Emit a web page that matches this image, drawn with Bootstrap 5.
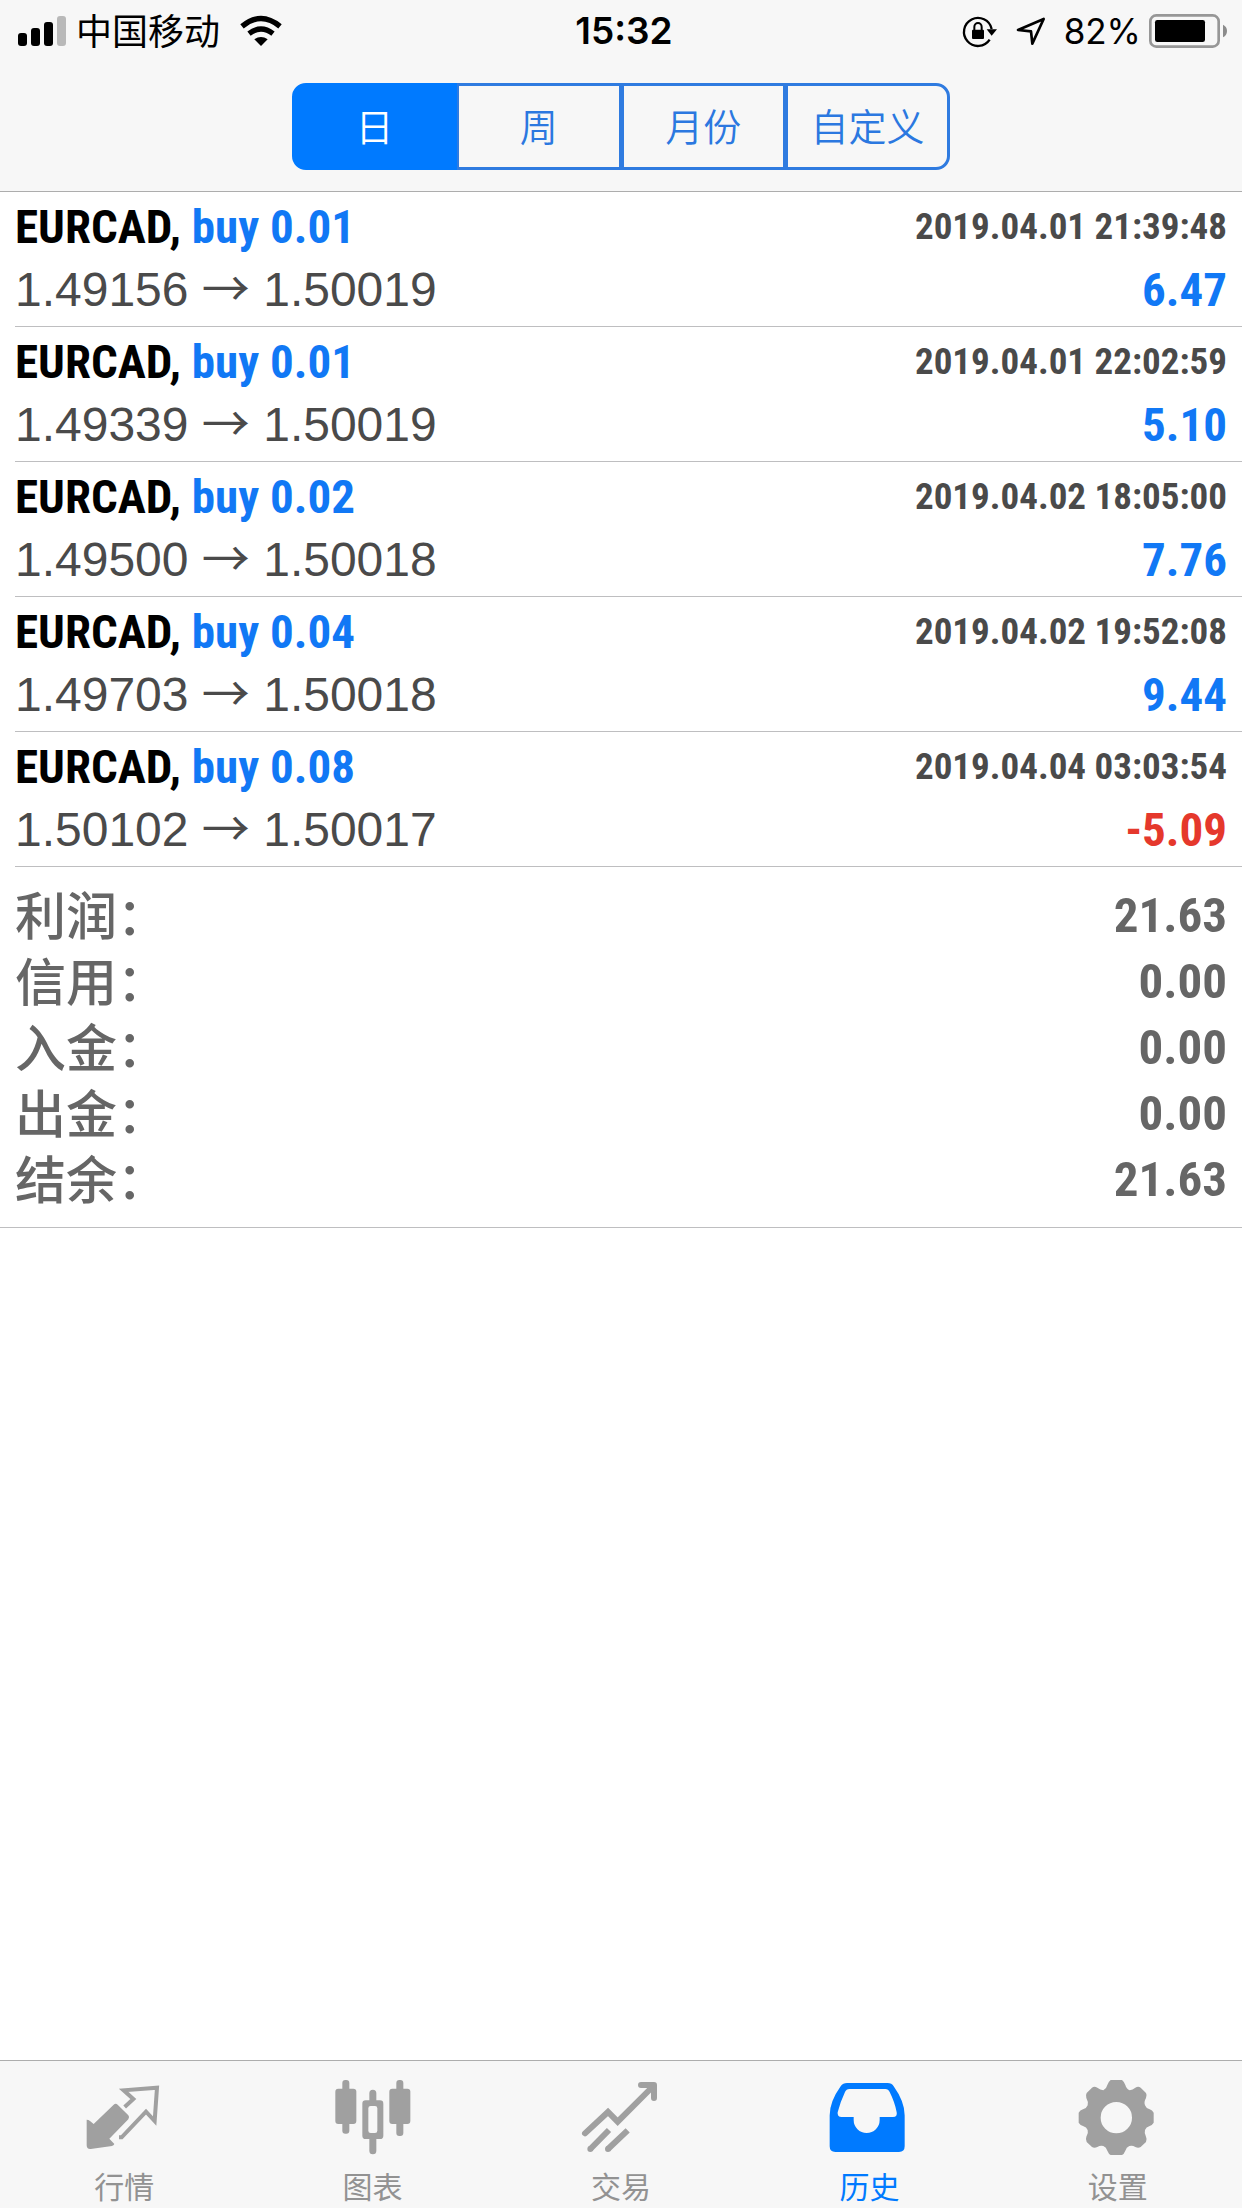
<!DOCTYPE html>
<html lang="zh-CN">
<head>
<meta charset="utf-8">
<meta name="viewport" content="width=device-width, initial-scale=1">
<title>历史</title>
<link href="https://cdn.jsdelivr.net/npm/bootstrap@5.3.0/dist/css/bootstrap.min.css" rel="stylesheet">
<style>
  :root { --ios-blue: #007aff; --bar: #f7f7f7; --edge: 15px; }
  body { font-family: "Liberation Sans", "Noto Sans CJK SC", sans-serif; color: #000; background: #fff; }
  svg { display: block; overflow: visible; flex: none; }
  .top-bar { background: var(--bar); border-bottom: 1px solid #adadad; padding-bottom: 21px; }
  .status-line { height: 62px; padding: 0 15px 0 18px; font-family: Inter, "Noto Sans CJK SC", sans-serif; font-size: 36px; line-height: 36px; }
  .status-side { flex: 1 1 0; }
  .carrier { margin-left: 10px; margin-right: 20px; padding-top: 2px; }
  .clock { font-size: 37px; font-weight: 600; padding-left: 3px; }
  .locate { margin-left: 20px; }
  .charge { font-size: 35px; margin: 0 8px 0 19px; }
  .period { width: 53%; margin-top: 21px; }
  .period .btn { flex: 1 1 0; padding: 0; height: 87px; line-height: 78px; font-size: 38px; font-family: "Noto Sans CJK SC", sans-serif; font-weight: 350;
    border-width: 3px; border-radius: 14px;
    --bs-btn-color: #2b78e0; --bs-btn-border-color: #2f7be0;
    --bs-btn-hover-color: #2b78e0; --bs-btn-hover-border-color: #2f7be0;
    --bs-btn-active-color: #fff; --bs-btn-active-bg: var(--ios-blue); --bs-btn-active-border-color: var(--ios-blue); }
  .period > .btn:not(:nth-child(2)) { margin-left: -3px; }
  .deals { margin-left: var(--edge); }
  .deal { padding: 3px var(--edge) 5px 0; border-bottom: 1px solid #bebec0; }
  .deal-line { height: 63px; line-height: 63px; }
  .narrow { font-family: "Liberation Sans Narrow", "Roboto Condensed", "Liberation Sans", sans-serif; font-weight: 700; }
  .pair { font-size: 47px; }
  .buy, .gain { color: #1178f5; }
  .loss { color: #e5382c; }
  .stamp { font-size: 37px; color: #4a4a4a; }
  .prices { font-size: 48px; color: #4a4a4a; }
  .to { font-family: "Noto Sans CJK SC", sans-serif; line-height: 1; }
  .result { font-size: 47px; }
  .totals { padding: 15px var(--edge); border-bottom: 1px solid #bebec0; color: #666; }
  .total-line { height: 66px; line-height: 68px; font-size: 49px; }
  .total-line dt { font-family: "Noto Sans CJK SC", sans-serif; font-size: 51px; line-height: 62px; font-weight: 500; }
  .tab-bar { background: var(--bar); border-top: 1px solid #adadad; padding: 19px 0 5px; }
  .tab-bar .nav-link { padding: 0; color: #929292; font: 400 30px/36px "Noto Sans CJK SC", sans-serif; gap: 11px; }
  .tab-bar .nav-link svg { color: #a0a0a0; }
  .tab-bar .nav-link.active, .tab-bar .nav-link.active svg { color: var(--ios-blue); }
</style>
</head>
<body class="d-flex flex-column min-vh-100">
<header class="top-bar">
  <div class="status-line d-flex align-items-center">
    <div class="status-side d-flex align-items-center">
      <svg width="48" height="30" viewBox="54 45 144 90"><rect x="54" y="96" width="27" height="39" rx="9"/><rect x="93" y="81" width="27" height="54" rx="9"/><rect x="132" y="63" width="27" height="72" rx="9"/><rect x="171" y="45" width="27" height="90" rx="9" fill="#b9b9b9"/></svg>
      <span class="carrier">中国移动</span>
      <svg width="42" height="30" viewBox="720 45 126 90"><g fill="none" stroke="#000" stroke-width="16"><path d="M726 76Q783 29 840 76"/><path d="M747 98Q783 70 819 98"/></g><path d="M763 115Q783 101 803 115L783 135Z"/></svg>
    </div>
    <time class="clock">15:32</time>
    <div class="status-side d-flex align-items-center justify-content-end">
      <svg width="34" height="30" viewBox="435 45 102 90"><path d="M515 116A42 42 0 1 1 521 84" fill="none" stroke="#000" stroke-width="7"/><path d="M506 85H537L521 104Z"/><rect x="462" y="86" width="36" height="28" rx="3"/><path d="M469 88V78a11 12 0 0 1 22 0V88" fill="none" stroke="#000" stroke-width="6"/></svg>
      <svg class="locate" width="28" height="27" viewBox="596 51 84 81"><path d="M599 87L676 54L642 128L638 91Z" fill="none" stroke="#000" stroke-width="8" stroke-linejoin="round"/></svg>
      <span class="charge">82%</span>
      <svg width="78" height="34" viewBox="987 39 234 102"><rect x="991" y="43" width="205" height="94" rx="18" fill="none" stroke="#979797" stroke-width="8"/><rect x="1005" y="57" width="150" height="66" rx="7"/><path d="M1209 71q12 6 12 19t-12 19z" fill="#8c8c8c"/></svg>
    </div>
  </div>
  <div class="period btn-group d-flex mx-auto" role="group" aria-label="时间范围">
    <input class="btn-check" type="radio" name="period" id="p-day" checked><label class="btn btn-outline-primary" for="p-day">日</label>
    <input class="btn-check" type="radio" name="period" id="p-week"><label class="btn btn-outline-primary" for="p-week">周</label>
    <input class="btn-check" type="radio" name="period" id="p-month"><label class="btn btn-outline-primary" for="p-month">月份</label>
    <input class="btn-check" type="radio" name="period" id="p-custom"><label class="btn btn-outline-primary" for="p-custom">自定义</label>
  </div>
</header>

<main class="flex-grow-1">
  <ul class="deals list-unstyled mb-0">
    <li class="deal">
      <div class="deal-line d-flex justify-content-between"><span class="pair narrow">EURCAD, <span class="buy">buy 0.01</span></span><time class="stamp narrow">2019.04.01 21:39:48</time></div>
      <div class="deal-line d-flex justify-content-between"><span class="prices">1.49156 <span class="to">→</span> 1.50019</span><span class="result narrow gain">6.47</span></div>
    </li>
    <li class="deal">
      <div class="deal-line d-flex justify-content-between"><span class="pair narrow">EURCAD, <span class="buy">buy 0.01</span></span><time class="stamp narrow">2019.04.01 22:02:59</time></div>
      <div class="deal-line d-flex justify-content-between"><span class="prices">1.49339 <span class="to">→</span> 1.50019</span><span class="result narrow gain">5.10</span></div>
    </li>
    <li class="deal">
      <div class="deal-line d-flex justify-content-between"><span class="pair narrow">EURCAD, <span class="buy">buy 0.02</span></span><time class="stamp narrow">2019.04.02 18:05:00</time></div>
      <div class="deal-line d-flex justify-content-between"><span class="prices">1.49500 <span class="to">→</span> 1.50018</span><span class="result narrow gain">7.76</span></div>
    </li>
    <li class="deal">
      <div class="deal-line d-flex justify-content-between"><span class="pair narrow">EURCAD, <span class="buy">buy 0.04</span></span><time class="stamp narrow">2019.04.02 19:52:08</time></div>
      <div class="deal-line d-flex justify-content-between"><span class="prices">1.49703 <span class="to">→</span> 1.50018</span><span class="result narrow gain">9.44</span></div>
    </li>
    <li class="deal">
      <div class="deal-line d-flex justify-content-between"><span class="pair narrow">EURCAD, <span class="buy">buy 0.08</span></span><time class="stamp narrow">2019.04.04 03:03:54</time></div>
      <div class="deal-line d-flex justify-content-between"><span class="prices">1.50102 <span class="to">→</span> 1.50017</span><span class="result narrow loss">-5.09</span></div>
    </li>
  </ul>
  <dl class="totals mb-0">
    <div class="total-line d-flex justify-content-between"><dt>利润：</dt><dd class="narrow mb-0">21.63</dd></div>
    <div class="total-line d-flex justify-content-between"><dt>信用：</dt><dd class="narrow mb-0">0.00</dd></div>
    <div class="total-line d-flex justify-content-between"><dt>入金：</dt><dd class="narrow mb-0">0.00</dd></div>
    <div class="total-line d-flex justify-content-between"><dt>出金：</dt><dd class="narrow mb-0">0.00</dd></div>
    <div class="total-line d-flex justify-content-between"><dt>结余：</dt><dd class="narrow mb-0">21.63</dd></div>
  </dl>
</main>

<nav class="tab-bar nav nav-justified" aria-label="主导航">
  <a class="nav-link nav-item d-flex flex-column align-items-center" href="#quotes">
    <svg width="76" height="76" viewBox="259 90 228 228" fill="currentColor"><path d="M342 164Q348 159 354 164L386 196Q391 202 386 208L329 266L344 282Q342 287 337 288L273 297Q261 298 261 286V209Q267 209 271 213L282 222Z"/><path d="M375 171L401 147L372 121L472 113L465 213L439 185L366 262H358" fill="none" stroke="currentColor" stroke-width="12"/></svg>
    行情</a>
  <a class="nav-link nav-item d-flex flex-column align-items-center" href="#charts">
    <svg width="76" height="76" viewBox="1004 90 228 228" fill="currentColor"><rect x="1026" y="90" width="21" height="161" rx="9"/><rect x="1005" y="116" width="63" height="106" rx="9"/><rect x="1188" y="90" width="21" height="168" rx="9"/><rect x="1167" y="116" width="63" height="106" rx="9"/><path d="M1107 151V130a10 10 0 0 1 21 0V151H1139q10 0 10 10V257q0 10-10 10H1128V302a10 10 0 0 1-21 0V267H1096q-10 0-10-10V161q0-10 10-10ZM1111 168q-7 0-7 7V242q0 7 7 7H1124q7 0 7-7V175q0-7-7-7Z" fill-rule="evenodd"/></svg>
    图表</a>
  <a class="nav-link nav-item d-flex flex-column align-items-center" href="#trade">
    <svg width="76" height="76" viewBox="489 90 228 228" fill="none" stroke="currentColor" stroke-width="18"><path d="M495 250L564 186L593 215L700 108" stroke-linecap="round"/><path d="M663 105H702V144" stroke-linecap="round" stroke-linejoin="round"/><path d="M678 105H702V130Z" fill="currentColor" stroke="none"/><path d="M511 297L567 240M564 297L623 241"/><path d="M511 297h0M564 297h0" stroke-linecap="round"/></svg>
    交易</a>
  <a class="nav-link nav-item active d-flex flex-column align-items-center" aria-current="page" href="#history">
    <svg width="76" height="76" viewBox="28 90 228 228" fill="currentColor"><path d="M76 99H198Q210 99 216 109Q249 155 249 196V289Q249 306 232 306H41Q24 306 24 289V196Q24 155 57 109Q64 99 76 99ZM83 117Q74 117 70 126Q55 158 48 187Q46 201 60 201H96V210A39 39 0 0 0 174 210V201H214Q228 201 225 187Q220 158 204 126Q200 117 191 117Z" fill-rule="evenodd"/></svg>
    历史</a>
  <a class="nav-link nav-item d-flex flex-column align-items-center" href="#settings">
    <svg width="76" height="76" viewBox="775 90 228 228" fill="currentColor"><path fill-rule="evenodd" d="M867 90H901Q907 94 911 105Q914 117 924 121Q933 120 941 113Q950 108 957 113L973 129Q977 136 973 144Q966 156 970 166Q973 175 984 178Q992 181 996 188V218Q992 225 984 228Q973 231 970 240Q967 250 973 260Q977 268 973 276L957 291Q950 295 941 291Q932 285 923 288Q914 292 911 302Q907 312 901 315H867Q861 312 857 302Q854 292 845 288Q836 285 827 291Q818 295 811 291L795 276Q791 268 794 260Q801 250 798 240Q795 231 784 228Q775 225 771 218V188Q775 181 784 178Q795 175 798 166Q801 156 794 144Q791 136 795 129L811 113Q818 108 827 113Q836 120 845 121Q854 117 857 105Q861 94 867 90ZM884 156A47 47 0 1 0 884 250A47 47 0 1 0 884 156Z"/></svg>
    设置</a>
</nav>
<script src="https://cdn.jsdelivr.net/npm/bootstrap@5.3.0/dist/js/bootstrap.bundle.min.js"></script>
</body>
</html>
